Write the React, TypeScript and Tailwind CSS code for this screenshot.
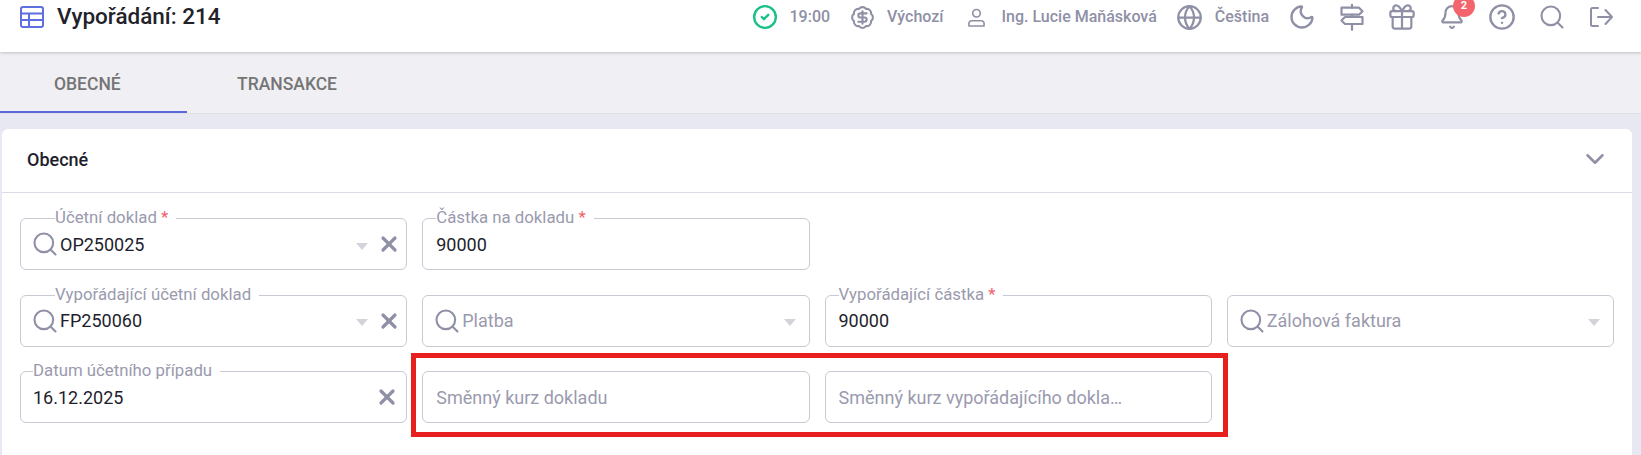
import React from 'react';
import { CircleCheck, BadgeDollarSign, Globe, Moon, Bell, CircleHelp, Search, ChevronDown, X } from 'lucide-react';

const Field = ({ label, required, value, placeholder, search, caret, clear }: {
  label?: string; required?: boolean; value?: string; placeholder?: string;
  search?: boolean; caret?: boolean; clear?: boolean;
}) => (
  <div className={`relative h-[52px] rounded-[6px] border border-[#c9c9d4] bg-white flex items-center pr-[3px] ${clear && !search ? 'pl-[12px]' : 'pl-[13px]'}`}>
    {label && (
      <span className={`absolute top-[-12px] ${search ? 'left-[34px]' : clear ? 'left-[12px]' : 'left-[13px]'} bg-white pr-[8px] text-[16.800px] leading-[20px] text-[#9a9aae] whitespace-nowrap`}>
        {label}
        {required && <span className="text-[#f2616b]"> *</span>}
      </span>
    )}
    {search && <Search className="w-[28px] h-[28px] text-[#8f90a6] -ml-[3px] shrink-0" strokeWidth={1.8} />}
    <span className={`flex-1 truncate text-[18px] ${search ? 'ml-[1px]' : ''} ${value ? 'text-[#1e1e2d]' : 'text-[#9a9aae]'}`}>{value ?? placeholder}</span>
    {caret && <span className={`w-0 h-0 border-l-[6px] border-r-[6px] border-t-[7px] border-l-transparent border-r-transparent border-t-[#d3d3dc] mt-[4px] ${clear ? 'mr-[7px]' : 'mr-[10px]'}`} />}
    {clear && <X className={`w-[24px] h-[24px] text-[#8f90a6] ml-[2px] ${caret ? 'mr-[2px]' : 'mr-[4px]'}`} strokeWidth={3.2} />}
  </div>
);

const TableIcon = () => (
  <svg viewBox="0 0 24 22" className="w-[24px] h-[22px] text-[#5f6ee0]" fill="none" stroke="currentColor" strokeWidth="2">
    <rect x="1" y="1" width="22" height="20" rx="2" />
    <path d="M1 7.5h22M1 14h22M9 7.5V21" />
  </svg>
);

const SignIcon = () => (
  <svg viewBox="0 0 24 24" className="w-[28px] h-[28px]" fill="none" stroke="currentColor" strokeWidth="1.9" strokeLinejoin="round" strokeLinecap="round">
    <path d="M12 1.5v2.5M12 10v2M12 18v5" />
    <path d="M3 4h15l3 3-3 3H3z" />
    <path d="M6 12h15v6H6l-3-3z" />
  </svg>
);

const GiftIcon = () => (
  <svg viewBox="0 0 24 24" className="w-[28px] h-[28px]" fill="none" stroke="currentColor" strokeWidth="1.9" strokeLinejoin="round" strokeLinecap="round">
    <rect x="2" y="7" width="20" height="5" rx="1.5" />
    <path d="M4 12v8a2 2 0 0 0 2 2h12a2 2 0 0 0 2-2v-8M12 7v15" />
    <path d="M12 7C10 3 8.5 2 7 2a2.5 2.5 0 0 0 0 5M12 7c2-4 3.500-5 5-5a2.500 2.500 0 0 1 0 5" />
  </svg>
);

const UserIcon = () => (
  <svg viewBox="0 0 18 20" className="w-[17px] h-[19px]" fill="none" stroke="currentColor" strokeWidth="1.7">
    <circle cx="9" cy="5.500" r="4" />
    <path d="M1 17a3 3 0 0 1 3-3.500h10a3 3 0 0 1 3 3.500v2H1z" strokeLinejoin="round" />
  </svg>
);

const ExitIcon = () => (
  <svg viewBox="0 0 24 24" className="w-[24px] h-[24px] -translate-x-[1px]" fill="none" stroke="currentColor" strokeWidth="2" strokeLinecap="round" strokeLinejoin="round">
    <path d="M9 3H3.500A1.500 1.500 0 0 0 2 4.500v15A1.500 1.500 0 0 0 3.500 21H9" />
    <path d="M9 12h14M16.500 5l6.500 7-6.500 7" />
  </svg>
);

const HeaderIcon = ({ children }: { children: React.ReactNode }) => (
  <span className="w-[28px] h-[28px] flex items-center justify-center text-[#8f90a6]">{children}</span>
);

export default function App() {
  return (
    <div className="w-[1641px] h-[455px] overflow-hidden bg-[#e8e8f3] font-['Roboto',sans-serif]">
      <header className="relative z-10 h-[52px] bg-white flex items-start justify-between pl-[20px] pr-[25px] shadow-[0_1px_3px_rgba(0,0,0,0.2)]">
        <div className="flex items-center h-[34px] gap-[13px]">
          <TableIcon />
          <span className="text-[22.500px] font-medium text-[#22222a]">Vypořádání: 214</span>
        </div>
        <div className="flex items-center h-[34px] text-[16px] font-medium text-[#8f90a6]">
          <CircleCheck className="w-[26px] h-[26px] text-[#1dbf8a]" strokeWidth={2.2} />
          <span className="ml-[11px]">19:00</span>
          <BadgeDollarSign className="w-[25px] h-[25px] ml-[20px]" strokeWidth={2} />
          <span className="ml-[12px]">Výchozí</span>
          <span className="ml-[25px]"><UserIcon /></span>
          <span className="ml-[16px]">Ing. Lucie Maňásková</span>
          <Globe className="w-[27px] h-[27px] ml-[19px]" strokeWidth={2} />
          <span className="ml-[12px]">Čeština</span>
          <div className="flex items-center gap-[22px] ml-[19px]">
            <HeaderIcon><Moon className="w-[28px] h-[28px]" strokeWidth={2} /></HeaderIcon>
            <HeaderIcon><SignIcon /></HeaderIcon>
            <HeaderIcon><GiftIcon /></HeaderIcon>
            <span className="relative">
              <HeaderIcon><Bell className="w-[26px] h-[26px]" strokeWidth={2} /></HeaderIcon>
              <span className="absolute top-[-8px] right-[-9px] w-[22px] h-[22px] rounded-full bg-[#f4646c] text-white text-[11px] font-bold flex items-center justify-center">2</span>
            </span>
            <HeaderIcon><CircleHelp className="w-[28px] h-[28px]" strokeWidth={2} /></HeaderIcon>
            <HeaderIcon><Search className="w-[30px] h-[30px]" strokeWidth={1.8} /></HeaderIcon>
            <HeaderIcon><ExitIcon /></HeaderIcon>
          </div>
        </div>
      </header>

      <nav className="relative h-[62px] bg-[#f0f0f4] flex border-b border-[#e0e0e6] text-[17.500px] font-medium text-[#757575]">
        <div className="w-[187px] flex items-center pl-[54px] pt-[5px] border-b-2 border-[#5b68dc] h-[61px]">OBECNÉ</div>
        <div className="flex items-center pl-[50px] pt-[3px]">TRANSAKCE</div>
      </nav>

      <section className="mt-[15px] ml-[2px] w-[1630px] h-[326px] bg-white rounded-t-[6px]">
        <div className="h-[64px] flex items-center justify-between pl-[25px] pr-[22px] pb-[3px] border-b border-[#dcdce6]">
          <span className="text-[18px] font-medium text-[#1e1e2d]">Obecné</span>
          <ChevronDown className="w-[30px] h-[30px] text-[#8f90a6]" strokeWidth={2} />
        </div>
        <div className="relative pl-[18px] pr-[18px] pt-[25px] grid grid-cols-4 gap-x-[15px] gap-y-[24.500px]">
          <Field label="Účetní doklad" required value="OP250025" search caret clear />
          <Field label="Částka na dokladu" required value="90000" />
          <div />
          <div />
          <Field label="Vypořádající účetní doklad" value="FP250060" search caret clear />
          <Field placeholder="Platba" search caret />
          <Field label="Vypořádající částka" required value="90000" />
          <Field placeholder="Zálohová faktura" search caret />
          <Field label="Datum účetního případu" value="16.12.2025" clear />
          <Field placeholder="Směnný kurz dokladu" />
          <Field placeholder="Směnný kurz vypořádajícího dokla…" />
          <div />
          <div className="absolute left-[409px] top-[160px] w-[817px] h-[84px] border-[5px] border-[#e81f1f] pointer-events-none" />
        </div>
      </section>
    </div>
  );
}
